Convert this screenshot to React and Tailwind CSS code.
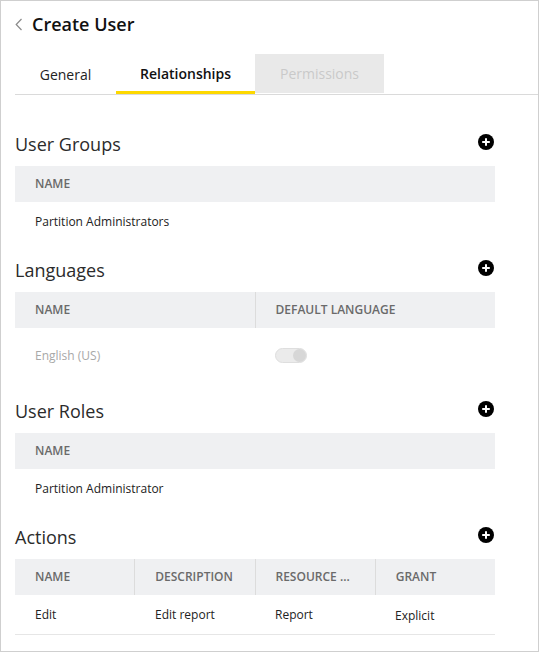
const font = { fontFamily: '"Open Sans", "Liberation Sans", sans-serif' };

function PlusButton() {
  return (
    <svg width="16" height="16" viewBox="0 0 16 16" className="mt-[2px] mr-px">
      <circle cx="8" cy="8" r="8" fill="#000" />
      <path d="M8 4.2v7.6M4.2 8h7.6" stroke="#fff" strokeWidth="2" />
    </svg>
  );
}

function SectionTitle({ title, first }) {
  return (
    <div className={`flex justify-between items-start h-[24px] mb-[10px] ${first ? "mt-[37px]" : "mt-4"}`}>
      <h2 className="text-[18px] leading-[24px] text-[#2b2b2b]">{title}</h2>
      <PlusButton />
    </div>
  );
}

function HeaderRow({ cols }) {
  return (
    <div className="flex h-[36px] bg-[#eff0f2]">
      {cols.map((c, i) => (
        <div
          key={c}
          className={`flex-1 flex items-center pl-5 text-[12px] font-semibold text-[#6a6a6a] ${
            i < cols.length - 1 ? "border-r border-[#dcdcdc]" : ""
          }`}
        >
          {c}
        </div>
      ))}
    </div>
  );
}

function Toggle() {
  return (
    <div className="w-[32px] h-[15px] rounded-full bg-[#ebebeb] border border-[#dedede] flex items-center justify-end">
      <div className="w-[13px] h-[13px] rounded-full bg-[#d7d7d7]" />
    </div>
  );
}

export default function App() {
  return (
    <div
      className="w-[539px] h-[652px] border border-[#cfcfcf] bg-white pl-[14px] pt-[11px] overflow-hidden"
      style={font}
    >
      {/* Title */}
      <div className="flex items-center h-[24px]">
        <svg width="8" height="13" viewBox="0 0 8 13" className="mt-px">
          <path d="M6.5 1 L1.2 6.5 L6.5 12" fill="none" stroke="#8a8a8a" strokeWidth="1.2" />
        </svg>
        <h1 className="ml-[9px] text-[18px] font-semibold text-[#111]">Create User</h1>
      </div>

      {/* Tabs */}
      <div className="mt-[18px] flex border-b border-[#dadada] text-[14px]">
        <div className="w-[101px] h-[40px] flex items-center justify-center text-[#222]">General</div>
        <div className="w-[139px] h-[40px] flex items-center justify-center text-[#111] font-semibold border-b-[3px] border-[#fdd800] -mb-px pt-[2px]">
          Relationships
        </div>
        <div className="w-[129px] h-[39px] flex items-center justify-center bg-[#e9e9e9] text-[#c9c9c9]">
          Permissions
        </div>
      </div>

      <div className="w-[480px]">
        {/* User Groups */}
        <SectionTitle title="User Groups" first />
        <HeaderRow cols={["NAME"]} />
        <div className="h-[40px] flex items-center pl-5 text-[12px] text-[#222]">Partition Administrators</div>

        {/* Languages */}
        <SectionTitle title="Languages" />
        <HeaderRow cols={["NAME", "DEFAULT LANGUAGE"]} />
        <div className="h-[55px] flex items-center text-[12px]">
          <div className="flex-1 pl-5 text-[#a8a8a8]">English (US)</div>
          <div className="flex-1 pl-5">
            <Toggle />
          </div>
        </div>

        {/* User Roles */}
        <SectionTitle title="User Roles" />
        <HeaderRow cols={["NAME"]} />
        <div className="h-[40px] flex items-center pl-5 text-[12px] text-[#222]">Partition Administrator</div>

        {/* Actions */}
        <SectionTitle title="Actions" />
        <HeaderRow cols={["NAME", "DESCRIPTION", "RESOURCE ...", "GRANT"]} />
        <div className="h-[40px] flex border-b border-[#e6e6e6] text-[12px] text-[#222]">
          <div className="flex-1 flex items-center pl-5">Edit</div>
          <div className="flex-1 flex items-center pl-5">Edit report</div>
          <div className="flex-1 flex items-center pl-5">Report</div>
          <div className="flex-1 flex items-center pl-5 pt-[3px]">Explicit</div>
        </div>
      </div>
    </div>
  );
}
